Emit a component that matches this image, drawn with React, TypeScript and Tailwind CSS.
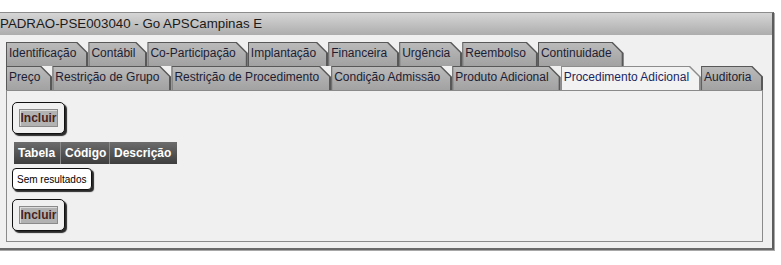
const rowOne = [
  'Identificação',
  'Contábil',
  'Co-Participação',
  'Implantação',
  'Financeira',
  'Urgência',
  'Reembolso',
  'Continuidade',
]

const rowTwo = [
  'Preço',
  'Restrição de Grupo',
  'Restrição de Procedimento',
  'Condição Admissão',
  'Produto Adicional',
  'Procedimento Adicional',
  'Auditoria',
]

const ACTIVE = 'Procedimento Adicional'

function Tab({ label, active }: { label: string; active: boolean }) {
  return (
    <div
      className={`h-[24px] pl-[1px] pt-[1px] pr-[2px] [clip-path:polygon(0_0,calc(100%_-_11px)_0,100%_11px,100%_100%,0_100%)] ${
        active ? 'bg-[#8c8c8c]' : 'bg-[#585858]'
      }`}
    >
      <div
        className={`h-full whitespace-nowrap pl-[2px] pr-[10px] text-[12px] leading-[21px] [clip-path:polygon(0_0,calc(100%_-_10px)_0,100%_10px,100%_100%,0_100%)] ${
          active
            ? 'bg-[#f2f2f2] text-[#1c2660]'
            : 'bg-gradient-to-b from-[#bababa] to-[#a2a2a2] text-[#1d1d33]'
        }`}
      >
        {label}
      </div>
    </div>
  )
}

function IncluirBox() {
  return (
    <div className="flex h-[32px] w-[53px] items-center justify-center rounded-[5px] border-[1.5px] border-[#111] bg-[#f0f0f0] shadow-[2px_2px_1px_#2a2a2a]">
      <button className="flex h-[18px] w-[39px] items-center justify-center border border-[#8a8a8a] bg-[#b2b2b2] text-[12px] font-bold leading-none text-[#4a1f1f] shadow-[inset_1px_1px_0_#dcdcdc]">
        Incluir
      </button>
    </div>
  )
}

export default function App() {
  return (
    <div className="h-[265px] w-[781px] overflow-hidden bg-white font-['Liberation_Sans',Arial,sans-serif]">
      <div className="ml-[-4px] mt-[12px] w-[778px] border-l border-t border-[#8c8c8c] border-r-[2px] border-r-[#5c5c5c] border-b-[2px] border-b-[#6a6a6a] bg-[#f0f0f0] shadow-[1px_1px_0_#a8a8a8]">
        <div className="h-[22px] bg-gradient-to-b from-[#d6d6d6] to-[#adadad] pl-[3px] text-[13.3px] leading-[22px] text-[#1a1a1a]">
          PADRAO-PSE003040 - Go APSCampinas E
        </div>

        <div className="pl-[9px] pr-[9px] pb-[6px] pt-[7px]">
          <div className="flex">
            {rowOne.map((t) => (
              <Tab key={t} label={t} active={t === ACTIVE} />
            ))}
          </div>
          <div className="flex">
            {rowTwo.map((t) => (
              <Tab key={t} label={t} active={t === ACTIVE} />
            ))}
          </div>

          <div className="h-[152px] w-[757px] border border-[#8a8a8a] px-[5px] pt-[11px]">
            <IncluirBox />

            <div className="ml-[2px] mt-[8px] flex h-[22px] w-fit bg-gradient-to-b from-[#6c6c6c] to-[#3e3e3e] text-[12px] font-bold leading-[22px] text-white">
              <div className="w-[47px] border-r border-[#8a8a8a] px-[4px]">Tabela</div>
              <div className="w-[49px] border-r border-[#8a8a8a] px-[4px]">Código</div>
              <div className="w-[67px] px-[4px]">Descrição</div>
            </div>

            <div className="mt-[4px] flex h-[22px] w-[80px] items-center rounded-[4px] border-[1.5px] border-[#111] bg-white px-[4px] text-[10px] text-black shadow-[2px_2px_1px_#2a2a2a]">
              Sem resultados
            </div>

            <div className="mt-[9px]">
              <IncluirBox />
            </div>
          </div>
        </div>
      </div>
    </div>
  )
}
